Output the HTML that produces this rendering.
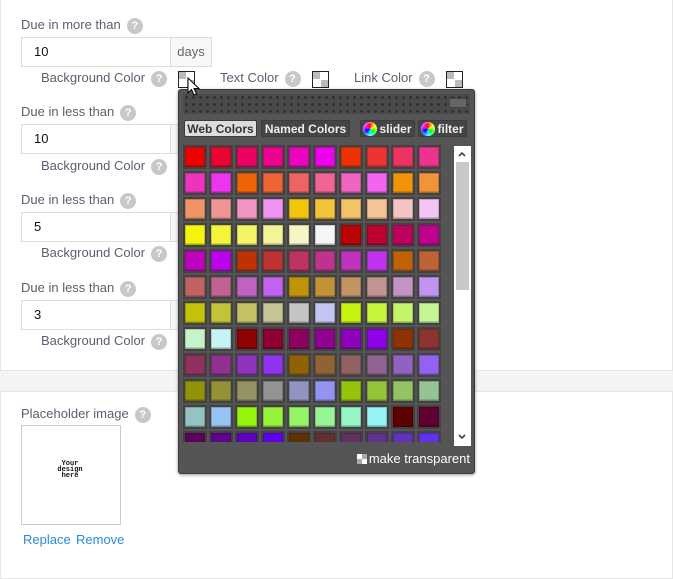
<!DOCTYPE html>
<html><head><meta charset="utf-8"><style>
*{box-sizing:border-box;margin:0;padding:0}
body{width:673px;height:579px;background:#fff;position:relative;overflow:hidden;font-family:"Liberation Sans",sans-serif;font-size:13px;color:#556}
.a{position:absolute}
.card{position:absolute;left:0;width:673px;border:1px solid #e6e6e6;background:#fff}
.lbl{position:absolute;color:#5a6070;font-size:13px;white-space:nowrap}
.q{display:inline-block;width:16px;height:16px;border-radius:50%;background:#c8c8c8;color:#fff;font-size:11px;font-weight:bold;text-align:center;line-height:16px;vertical-align:0px;margin-left:6px}
.inp{position:absolute;left:21px;width:191px;height:30px;border:1px solid #ddd;background:#fff;color:#111;font-size:13px;line-height:28px;padding-left:12px}
.add{position:absolute;right:-1px;top:-1px;width:42px;height:30px;border:1px solid #ddd;background:#f7f7f7;color:#666;text-align:center;line-height:28px}
.chk{position:absolute;width:17px;height:17px;border:1px solid #222;background:#fff}
.chk i{position:absolute;width:7px;height:7px;background:#bbb}
.pn{position:absolute;left:178px;top:89px;width:297px;height:385px;background:#555;border:1px solid #3a3a3a;border-radius:3px;box-shadow:0 1px 3px rgba(0,0,0,.4)}
.top{position:absolute;left:4px;top:4px;width:287px;height:20px;background-color:#4a4a4a;background-image:radial-gradient(circle,#2e2e2e 1.2px,transparent 1.6px);background-size:7px 7px;border-radius:2px}
.tab{position:absolute;top:30px;height:17px;line-height:17px;font-weight:bold;font-size:12px;color:#eee;background:#454545;border:1px solid #3c3c3c;border-radius:2px;text-align:center;white-space:nowrap}
.wh{display:inline-block;width:14px;height:14px;border-radius:50%;background:conic-gradient(red,yellow,lime,cyan,blue,magenta,red);vertical-align:-3px;margin-right:2px;box-shadow:inset 0 0 3px #fff}
.g{position:absolute;left:4px;top:55px;width:260px;height:297px;overflow:hidden;filter:brightness(.96) saturate(.95)}
.g b{float:left;width:24px;height:24px;margin:0 2px 2px 0;background:#454545;padding:2px}
.g b i{display:block;width:20px;height:20px;box-shadow:inset 0 0 0 1px rgba(0,0,0,.18),inset 0 -2px 0 rgba(0,0,0,.14)}
</style></head><body>

<div class="card" style="top:0;height:371px;border-top:none"></div>
<div class="a" style="left:0;top:371px;width:673px;height:20px;background:#f4f4f4"></div>
<div class="card" style="top:391px;height:188px"></div>

<div class="lbl" style="left:21px;top:17px">Due in more than<span class="q">?</span></div>
<div class="inp" style="top:37px">10<div class="add">days</div></div>
<div class="lbl" style="left:41px;top:70px">Background Color<span class="q">?</span></div>
<div class="chk" style="left:178px;top:71px"><i style="left:0;top:0"></i><i style="left:8px;top:8px"></i></div>
<div class="lbl" style="left:220px;top:70px">Text Color<span class="q">?</span></div>
<div class="chk" style="left:312px;top:71px"><i style="left:0;top:0"></i><i style="left:8px;top:8px"></i></div>
<div class="lbl" style="left:354px;top:70px">Link Color<span class="q">?</span></div>
<div class="chk" style="left:446px;top:71px"><i style="left:0;top:0"></i><i style="left:8px;top:8px"></i></div>

<div class="lbl" style="left:21px;top:104px">Due in less than<span class="q">?</span></div>
<div class="inp" style="top:124px">10<div class="add"></div></div>
<div class="lbl" style="left:41px;top:158px">Background Color<span class="q">?</span></div>

<div class="lbl" style="left:21px;top:192px">Due in less than<span class="q">?</span></div>
<div class="inp" style="top:212px">5<div class="add"></div></div>
<div class="lbl" style="left:41px;top:245px">Background Color<span class="q">?</span></div>

<div class="lbl" style="left:21px;top:280px">Due in less than<span class="q">?</span></div>
<div class="inp" style="top:300px">3<div class="add"></div></div>
<div class="lbl" style="left:41px;top:333px">Background Color<span class="q">?</span></div>

<div class="lbl" style="left:21px;top:406px">Placeholder image<span class="q">?</span></div>
<div class="a" style="left:21px;top:425px;width:100px;height:100px;border:1px solid #ccc;background:#fff"></div>
<div class="a" style="left:52px;top:461px;width:36px;font-family:'Liberation Mono',monospace;font-size:7px;font-weight:bold;line-height:6px;color:#111;text-align:center">Your<br>design<br>here</div>
<div class="a" style="left:23px;top:532px;color:#2a8ae0;font-size:13px">Replace</div>
<div class="a" style="left:76px;top:532px;color:#2a8ae0;font-size:13px">Remove</div>

<div class="pn">
<div class="top"></div>
<div class="a" style="left:270px;top:8px;width:18px;height:10px;background:#666;border-radius:2px;border:1px solid #444"></div>
<div class="tab" style="left:5px;background:#ddd;color:#333;width:73px">Web Colors</div>
<div class="tab" style="left:82px;width:89px">Named Colors</div>
<div class="tab" style="left:181px;width:55px"><span class="wh"></span>slider</div>
<div class="tab" style="left:239px;width:49px"><span class="wh"></span>filter</div>
<div class="g">
<b><i style="background:#f00"></i></b><b><i style="background:#f03"></i></b><b><i style="background:#f06"></i></b><b><i style="background:#f09"></i></b><b><i style="background:#f0c"></i></b><b><i style="background:#f0f"></i></b><b><i style="background:#f30"></i></b><b><i style="background:#f33"></i></b><b><i style="background:#f36"></i></b><b><i style="background:#f39"></i></b>
<b><i style="background:#f3c"></i></b><b><i style="background:#f3f"></i></b><b><i style="background:#f60"></i></b><b><i style="background:#f63"></i></b><b><i style="background:#f66"></i></b><b><i style="background:#f69"></i></b><b><i style="background:#f6c"></i></b><b><i style="background:#f6f"></i></b><b><i style="background:#f90"></i></b><b><i style="background:#f93"></i></b>
<b><i style="background:#f96"></i></b><b><i style="background:#f99"></i></b><b><i style="background:#f9c"></i></b><b><i style="background:#f9f"></i></b><b><i style="background:#fc0"></i></b><b><i style="background:#fc3"></i></b><b><i style="background:#fc6"></i></b><b><i style="background:#fc9"></i></b><b><i style="background:#fcc"></i></b><b><i style="background:#fcf"></i></b>
<b><i style="background:#ff0"></i></b><b><i style="background:#ff3"></i></b><b><i style="background:#ff6"></i></b><b><i style="background:#ff9"></i></b><b><i style="background:#ffc"></i></b><b><i style="background:#fff"></i></b><b><i style="background:#c00"></i></b><b><i style="background:#c03"></i></b><b><i style="background:#c06"></i></b><b><i style="background:#c09"></i></b>
<b><i style="background:#c0c"></i></b><b><i style="background:#c0f"></i></b><b><i style="background:#c30"></i></b><b><i style="background:#c33"></i></b><b><i style="background:#c36"></i></b><b><i style="background:#c39"></i></b><b><i style="background:#c3c"></i></b><b><i style="background:#c3f"></i></b><b><i style="background:#c60"></i></b><b><i style="background:#c63"></i></b>
<b><i style="background:#c66"></i></b><b><i style="background:#c69"></i></b><b><i style="background:#c6c"></i></b><b><i style="background:#c6f"></i></b><b><i style="background:#c90"></i></b><b><i style="background:#c93"></i></b><b><i style="background:#c96"></i></b><b><i style="background:#c99"></i></b><b><i style="background:#c9c"></i></b><b><i style="background:#c9f"></i></b>
<b><i style="background:#cc0"></i></b><b><i style="background:#cc3"></i></b><b><i style="background:#cc6"></i></b><b><i style="background:#cc9"></i></b><b><i style="background:#ccc"></i></b><b><i style="background:#ccf"></i></b><b><i style="background:#cf0"></i></b><b><i style="background:#cf3"></i></b><b><i style="background:#cf6"></i></b><b><i style="background:#cf9"></i></b>
<b><i style="background:#cfc"></i></b><b><i style="background:#cff"></i></b><b><i style="background:#900"></i></b><b><i style="background:#903"></i></b><b><i style="background:#906"></i></b><b><i style="background:#909"></i></b><b><i style="background:#90c"></i></b><b><i style="background:#90f"></i></b><b><i style="background:#930"></i></b><b><i style="background:#933"></i></b>
<b><i style="background:#936"></i></b><b><i style="background:#939"></i></b><b><i style="background:#93c"></i></b><b><i style="background:#93f"></i></b><b><i style="background:#960"></i></b><b><i style="background:#963"></i></b><b><i style="background:#966"></i></b><b><i style="background:#969"></i></b><b><i style="background:#96c"></i></b><b><i style="background:#96f"></i></b>
<b><i style="background:#990"></i></b><b><i style="background:#993"></i></b><b><i style="background:#996"></i></b><b><i style="background:#999"></i></b><b><i style="background:#99c"></i></b><b><i style="background:#99f"></i></b><b><i style="background:#9c0"></i></b><b><i style="background:#9c3"></i></b><b><i style="background:#9c6"></i></b><b><i style="background:#9c9"></i></b>
<b><i style="background:#9cc"></i></b><b><i style="background:#9cf"></i></b><b><i style="background:#9f0"></i></b><b><i style="background:#9f3"></i></b><b><i style="background:#9f6"></i></b><b><i style="background:#9f9"></i></b><b><i style="background:#9fc"></i></b><b><i style="background:#9ff"></i></b><b><i style="background:#600"></i></b><b><i style="background:#603"></i></b>
<b><i style="background:#606"></i></b><b><i style="background:#609"></i></b><b><i style="background:#60c"></i></b><b><i style="background:#60f"></i></b><b><i style="background:#630"></i></b><b><i style="background:#633"></i></b><b><i style="background:#636"></i></b><b><i style="background:#639"></i></b><b><i style="background:#63c"></i></b><b><i style="background:#63f"></i></b>
</div>
<div class="a" style="left:275px;top:56px;width:17px;height:300px;background:#fff"></div>
<div class="a" style="left:277px;top:72px;width:13px;height:128px;background:#c8c8c8"></div>
<svg class="a" style="left:278px;top:60px" width="10" height="8" viewBox="0 0 10 8"><path d="M2 6 L5 3 L8 6" fill="none" stroke="#444" stroke-width="1.6"/></svg>
<svg class="a" style="left:278px;top:343px" width="10" height="8" viewBox="0 0 10 8"><path d="M2 2 L5 5 L8 2" fill="none" stroke="#444" stroke-width="1.6"/></svg>
<div class="a" style="right:4px;top:361px;color:#fff;font-size:13px;white-space:nowrap"><span style="display:inline-block;width:10px;height:10px;background:linear-gradient(#fff,#fff) 0 0/5px 5px no-repeat,linear-gradient(#fff,#fff) 5px 5px/5px 5px no-repeat,#aaa;vertical-align:-1px;margin-right:2px"></span>make transparent</div>
</div>

<svg class="a" style="left:187px;top:77px" width="14" height="20" viewBox="0 0 14 20"><path d="M1 1 L1 16 L4.5 12.5 L7 18 L9.5 17 L7 11.5 L12 11.5 Z" fill="#fff" stroke="#000" stroke-width="1"/></svg>
</body></html>
